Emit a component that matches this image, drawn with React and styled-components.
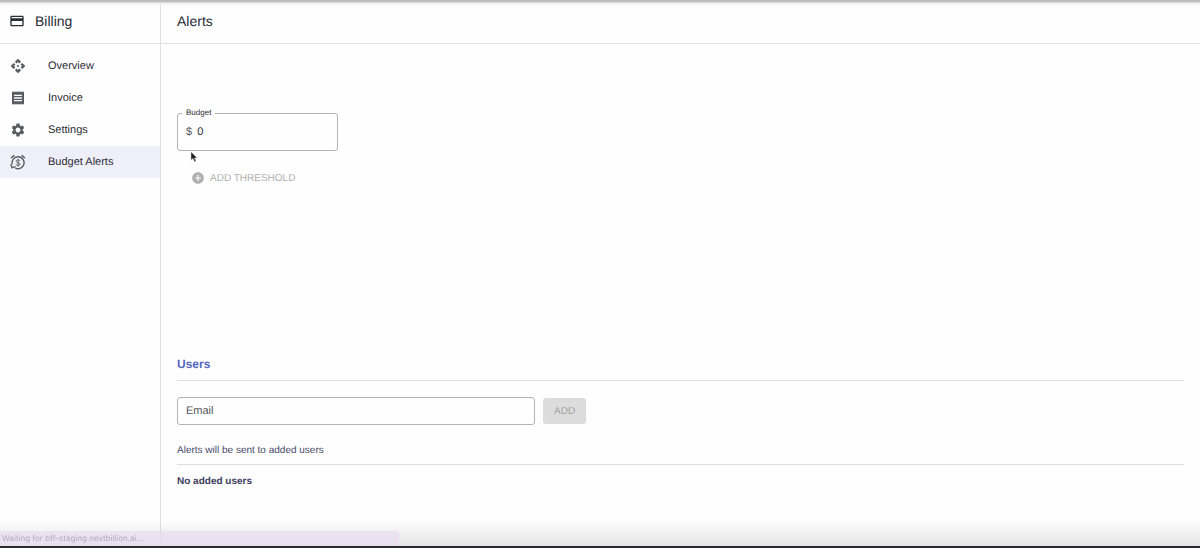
import React, { useState } from "react";
import styled, { createGlobalStyle, css } from "styled-components";
import {
  MdAddCircle,
  MdApi,
  MdCreditCard,
  MdReceipt,
  MdSettings,
} from "react-icons/md";

const GlobalStyle = createGlobalStyle`
  * {
    box-sizing: border-box;
  }

  body {
    margin: 0;
    background: #fefefe;
    color: #2c2d35;
    font-family: "Liberation Sans", Arial, sans-serif;
    font-size: 11px;
    text-rendering: geometricPrecision;
  }

  button,
  input {
    font-family: inherit;
    text-rendering: inherit;
  }
`;

const Page = styled.div`
  display: flex;
  min-height: 100vh;
`;

const Sidebar = styled.aside`
  flex: 0 0 161px;
  border-right: 1px solid #e0e0e2;
`;

const Header = styled.header`
  display: flex;
  align-items: center;
  gap: 10px;
  height: 44px;
  padding: 0 ${({ $wide }) => ($wide ? "16px" : "9px")} 2px;
  border-bottom: 1px solid #e2e2e2;
`;

const Title = styled.h1`
  margin: 0;
  font-size: 14px;
  line-height: 16px;
  font-weight: 400;
`;

const Nav = styled.nav`
  display: flex;
  flex-direction: column;
  padding-top: 6px;
`;

const NavItem = styled.a`
  display: flex;
  align-items: center;
  gap: 22px;
  height: 32px;
  padding: 0 10px;
  color: inherit;
  text-decoration: none;
  background: ${({ $active }) => ($active ? "#efeffa" : "transparent")};

  svg {
    color: #5a5b60;
  }
`;

const Main = styled.main`
  flex: 1;
  min-width: 0;
`;

const Content = styled.div`
  display: flex;
  flex-direction: column;
  padding: 64px 16px 16px;
`;

const BudgetSection = styled.section`
  min-height: 248px;
`;

const outline = css`
  border: 1px solid #b4b4b4;
  border-radius: 3px;
`;

const BudgetField = styled.fieldset`
  ${outline}
  width: 161px;
  min-width: 0;
  height: 43px;
  margin: 0;
  padding: 0 8px;

  legend {
    margin-left: -4px;
    padding: 0 4px;
    font-size: 8px;
    line-height: 10px;
  }
`;

const Amount = styled.div`
  display: flex;
  align-items: center;
  gap: 5px;
  height: 28px;
  color: #55565a;
`;

const AmountInput = styled.input`
  flex: 1;
  min-width: 0;
  padding: 0;
  border: 0;
  outline: 0;
  background: transparent;
  color: #2c2d35;
  font-size: 11px;
`;

const ThresholdButton = styled.button`
  display: flex;
  align-items: center;
  gap: 5px;
  height: 24px;
  margin: 15px 0 0 14px;
  padding: 0;
  border: 0;
  background: transparent;
  color: #b0b0b0;
  font-size: 10px;
`;

const UsersTitle = styled.h2`
  margin: 0;
  padding-bottom: 8px;
  border-bottom: 1px solid #dedede;
  color: #5268bd;
  font-size: 12px;
  line-height: 16px;
`;

const UserForm = styled.form`
  display: flex;
  align-items: center;
  gap: 8px;
  margin-top: 16px;
`;

const EmailInput = styled.input`
  ${outline}
  flex: 0 1 358px;
  min-width: 0;
  height: 28px;
  padding: 0 8px;
  background: transparent;
  font-size: 11px;

  &::placeholder {
    color: #55565a;
    opacity: 1;
  }
`;

const AddButton = styled.button`
  height: 26px;
  padding: 0 11px;
  border: 0;
  border-radius: 3px;
  background: #dcdcdc;
  color: #a3a3a3;
  font-size: 10px;
`;

const Note = styled.p`
  margin: 18px 0 0;
  padding-bottom: 5px;
  border-bottom: 1px solid #dedede;
  color: #474a66;
  font-size: 10px;
  line-height: 16px;
`;

const Empty = styled.p`
  margin: 9px 0 0;
  color: #3d4060;
  font-size: 10px;
  line-height: 16px;
  font-weight: 700;
`;

const TopShade = styled.div`
  position: fixed;
  inset: 0 0 auto;
  height: 6px;
  background: linear-gradient(#bdbdbd 25%, #ececec 50%, transparent);
  pointer-events: none;
`;

const BottomShade = styled.div`
  position: fixed;
  inset: auto 0 0;
  height: 28px;
  border-bottom: 2px solid #29292f;
  background: linear-gradient(transparent, rgba(0, 0, 0, 0.1));
  pointer-events: none;
`;

const Status = styled.div`
  position: fixed;
  left: 0;
  bottom: 2px;
  width: 399px;
  max-width: 100%;
  height: 15px;
  padding-left: 2px;
  border-top-right-radius: 3px;
  background: rgba(232, 222, 240, 0.8);
  color: #b3adb8;
  font-family: Inter, sans-serif;
  font-size: 8px;
  line-height: 15px;
`;

const Pointer = styled.svg`
  position: fixed;
  top: 151px;
  left: 190px;
  pointer-events: none;
`;

const BudgetAlarmIcon = () => (
  <svg width="16" height="16" viewBox="0 0 24 24" fill="none" stroke="currentColor">
    <path d="M1.5 6 6.5 2M17.5 2l5 4" strokeWidth="2.4" />
    <path d="M3.4 15.5A9 9 0 1 1 8 21.2" strokeWidth="2.1" />
    <path d="M1 15.5l2.2 5 5.3-1.500" strokeWidth="2" />
    <path
      d="M15 10.6c-.4-1.2-1.5-1.7-2.9-1.7-1.7 0-2.9.7-2.9 2 0 3 5.9 1.2 5.9 4.3 0 1.4-1.3 2.1-3 2.1-1.6 0-2.8-.7-3.1-2M12.1 7.3v11.5"
      strokeWidth="1.4"
    />
  </svg>
);

const navItems = [
  { label: "Overview", Icon: MdApi },
  { label: "Invoice", Icon: MdReceipt },
  { label: "Settings", Icon: MdSettings },
  { label: "Budget Alerts", Icon: BudgetAlarmIcon, active: true },
];

const App = () => {
  const [budget, setBudget] = useState("0");
  const [email, setEmail] = useState("");

  return (
    <>
      <GlobalStyle />
      <Page>
        <Sidebar>
          <Header>
            <MdCreditCard size={16} />
            <Title as="div">Billing</Title>
          </Header>
          <Nav>
            {navItems.map(({ label, Icon, active }) => (
              <NavItem key={label} href="#" $active={active}>
                <Icon size={16} />
                {label}
              </NavItem>
            ))}
          </Nav>
        </Sidebar>
        <Main>
          <Header $wide>
            <Title>Alerts</Title>
          </Header>
          <Content>
            <BudgetSection>
              <BudgetField>
                <legend>
                  <label htmlFor="budget">Budget</label>
                </legend>
                <Amount>
                  $
                  <AmountInput
                    id="budget"
                    value={budget}
                    onChange={(e) => setBudget(e.target.value)}
                  />
                </Amount>
              </BudgetField>
              <ThresholdButton type="button" disabled>
                <MdAddCircle size={14} />
                ADD THRESHOLD
              </ThresholdButton>
            </BudgetSection>
            <UsersTitle>Users</UsersTitle>
            <UserForm onSubmit={(e) => e.preventDefault()}>
              <EmailInput
                type="email"
                aria-label="Email"
                placeholder="Email"
                value={email}
                onChange={(e) => setEmail(e.target.value)}
              />
              <AddButton disabled={!email}>ADD</AddButton>
            </UserForm>
            <Note>Alerts will be sent to added users</Note>
            <Empty>No added users</Empty>
          </Content>
        </Main>
      </Page>
      <TopShade />
      <BottomShade />
      <Status>Waiting for bff-staging.nextbillion.ai...</Status>
      <Pointer width="8" height="12" viewBox="0 0 8 12">
        <path
          d="M1 .8v8.4l2-1.8 1.5 3.4 1.5-.7-1.5-3.2h2.7z"
          fill="#222"
          stroke="#ddd"
          strokeWidth=".5"
        />
      </Pointer>
    </>
  );
};

export default App;
